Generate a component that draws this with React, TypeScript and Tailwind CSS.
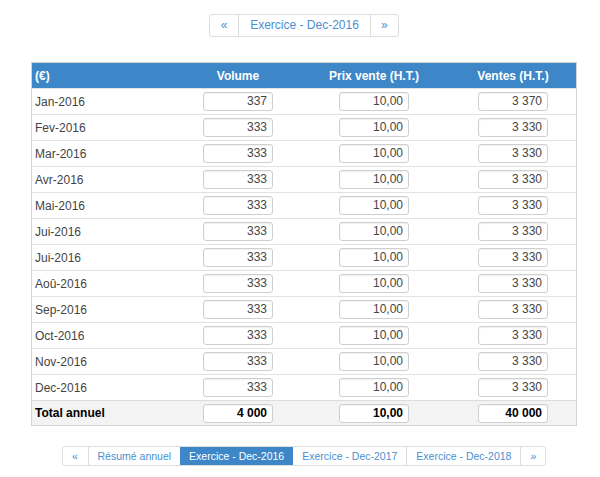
const MONTHS = [
  { label: 'Jan-2016', volume: '337', prix: '10,00', ventes: '3 370' },
  { label: 'Fev-2016', volume: '333', prix: '10,00', ventes: '3 330' },
  { label: 'Mar-2016', volume: '333', prix: '10,00', ventes: '3 330' },
  { label: 'Avr-2016', volume: '333', prix: '10,00', ventes: '3 330' },
  { label: 'Mai-2016', volume: '333', prix: '10,00', ventes: '3 330' },
  { label: 'Jui-2016', volume: '333', prix: '10,00', ventes: '3 330' },
  { label: 'Jui-2016', volume: '333', prix: '10,00', ventes: '3 330' },
  { label: 'Aoû-2016', volume: '333', prix: '10,00', ventes: '3 330' },
  { label: 'Sep-2016', volume: '333', prix: '10,00', ventes: '3 330' },
  { label: 'Oct-2016', volume: '333', prix: '10,00', ventes: '3 330' },
  { label: 'Nov-2016', volume: '333', prix: '10,00', ventes: '3 330' },
  { label: 'Dec-2016', volume: '333', prix: '10,00', ventes: '3 330' },
];

const gridCols = 'grid grid-cols-[144px_124px_148px_130px]';

const cellInput =
  'w-[70px] h-[19px] rounded-[3px] border border-[#cfcfcf] bg-white px-[5px] text-right text-[12px] leading-[17px] text-[#444] shadow-[inset_0_1px_1px_rgba(0,0,0,0.06)]';

function Cell({ value, bold }: { value: string; bold?: boolean }) {
  return (
    <div className="flex items-center justify-center">
      <div className={`${cellInput} ${bold ? 'font-bold text-black' : ''}`}>{value}</div>
    </div>
  );
}

export default function App() {
  return (
    <div className="min-h-[477px] w-[600px] bg-white font-['Liberation_Sans',Arial,sans-serif]">
      <div className="ml-[31px] w-[546px] pt-[14px]">
        {/* pagination haut */}
        <div className="flex justify-center">
          <div className="flex h-[23px] rounded-[3px] border border-[#dddddd] text-[12px] leading-[21px] text-[#4a8fd0]">
            <span className="w-[28px] text-center">«</span>
            <span className="border-l border-[#dddddd] px-[11px]">Exercice - Dec-2016</span>
            <span className="w-[28px] border-l border-[#dddddd] text-center">»</span>
          </div>
        </div>

        {/* tableau */}
        <div className="mt-[25px] border border-[#d4d4d4] text-[12px]">
          <div className={`${gridCols} h-[25px] items-center bg-[#3d87c8] font-bold text-white`}>
            <div className="pl-[3px]">(€)</div>
            <div className="text-center">Volume</div>
            <div className="text-center">Prix vente (H.T.)</div>
            <div className="text-center">Ventes (H.T.)</div>
          </div>
          {MONTHS.map((m, i) => (
            <div key={i} className={`${gridCols} h-[26px] items-center border-t border-[#e2e2e2] text-[#444]`}>
              <div className="pl-[3px]">{m.label}</div>
              <Cell value={m.volume} />
              <Cell value={m.prix} />
              <Cell value={m.ventes} />
            </div>
          ))}
          <div className={`${gridCols} h-[25px] items-center border-t border-[#dcdcdc] bg-[#f3f3f3] font-bold text-black`}>
            <div className="pl-[3px]">Total annuel</div>
            <Cell value="4 000" bold />
            <Cell value="10,00" bold />
            <Cell value="40 000" bold />
          </div>
        </div>

        {/* pagination bas */}
        <div className="mt-[20px] flex justify-center">
          <div className="flex h-[20px] rounded-[3px] border border-[#dddddd] text-[10.5px] leading-[18px] text-[#4a8fd0]">
            <span className="w-[25px] text-center">«</span>
            <span className="border-l border-[#dddddd] px-[9px]">Résumé annuel</span>
            <span className="bg-[#3d87c8] px-[9px] text-white">Exercice - Dec-2016</span>
            <span className="px-[9px]">Exercice - Dec-2017</span>
            <span className="border-l border-[#dddddd] px-[9px]">Exercice - Dec-2018</span>
            <span className="w-[25px] border-l border-[#dddddd] text-center">»</span>
          </div>
        </div>
      </div>
    </div>
  );
}
